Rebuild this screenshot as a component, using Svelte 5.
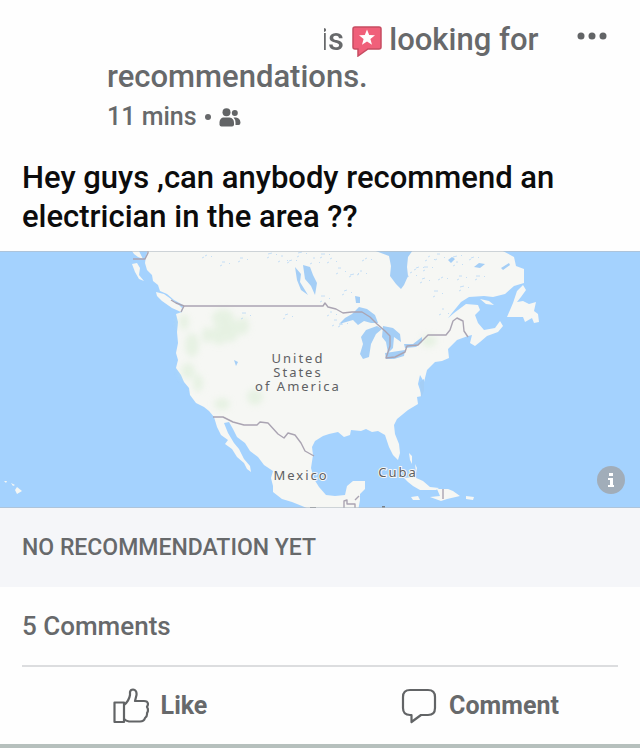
<script>
  const country = [
    { x: 298, y: 363, text: 'United' },
    { x: 298, y: 377, text: 'States' },
    { x: 298, y: 391, text: 'of America' }
  ];
  const labels = [
    { x: 301, y: 480, text: 'Mexico' },
    { x: 398, y: 477, text: 'Cuba' }
  ];
  const lakes = [
    [205, 256], [222, 262], [268, 254], [281, 256], [289, 261], [321, 254], [330, 259], [338, 268], [350, 275],
    [360, 271], [344, 291], [321, 296], [365, 259], [240, 258], [298, 253], [313, 258], [416, 268], [424, 267],
    [428, 257], [437, 254], [453, 257], [456, 262], [422, 279], [434, 291], [441, 278], [459, 276], [460, 287],
    [442, 309], [471, 258], [476, 276], [410, 273], [334, 320], [339, 325], [330, 312], [285, 315], [242, 313]
  ];
  const greens = [
    [223, 318, 11, 9], [230, 330, 9, 12], [219, 335, 8, 10], [243, 326, 6, 9], [192, 345, 7, 12], [184, 322, 5, 8],
    [188, 371, 7, 8], [198, 383, 5, 9], [255, 397, 8, 8], [222, 404, 8, 6], [429, 341, 8, 6], [207, 335, 5, 8]
  ];
</script>

<article class="post">
  <header>
    <h1>
      <span class="name"></span><span class="is">is</span>
      <svg class="badge" viewBox="0 0 30 31" aria-hidden="true">
        <path d="M3 1H27Q29 1 29 3V21Q29 23 27 23H16L6 30V23H3Q1 23 1 21V3Q1 1 3 1Z" fill="#f0607a" stroke="#c64c62" stroke-width="1.5" />
        <path d="M15 3.5L17.2 9L23 9.3L18.4 13L20 18.7L15 15.4L10 18.7L11.6 13L7 9.3L12.8 9Z" fill="#fff" />
      </svg>
      looking for recommendations.
    </h1>
    <button class="more" aria-label="More options">
      <svg viewBox="0 0 30 8" fill="#626466"><circle cx="4" cy="4" r="3.5" /><circle cx="15" cy="4" r="3.5" /><circle cx="26" cy="4" r="3.5" /></svg>
    </button>
    <div class="meta">
      <span>11 mins</span><span class="dot"></span>
      <svg viewBox="0 0 22 19" fill="#626466" role="img" aria-label="Friends">
        <circle cx="7.5" cy="4.2" r="4" />
        <circle cx="15.8" cy="5" r="3" />
        <path d="M4 9.5H10.5Q15 10 15 15V16.5Q15 18.5 13 18.5H2.5Q.5 18.5 .5 16.5V14Q1 10 4 9.5Z" />
        <path d="M14.5 9.5H17Q21 10 21.5 14.5Q21.5 17 19.5 17H16.5V14.5Q16.5 11.5 14.5 9.5Z" />
      </svg>
    </div>
  </header>

  <p class="message">Hey guys ,can anybody recommend an electrician in the area ??</p>

  <div class="map">
    <svg viewBox="0 251 640 257" role="img" aria-label="Map of North America">
      <defs>
        <filter id="soft"><feGaussianBlur stdDeviation="3" /></filter>
      </defs>
      <rect y="251" width="640" height="257" fill="#a4d2fe" />
      <g fill="#f6f7f4">
        <path d="M148 250L146 256L145 263L147 270L152 275L153 281L158 285L160 291L167 294L174 300L183 305L182 312L176 314L178 322L177 332L178 343L176 353L178 360L176 368L181 375L184 382L189 388L190 395L196 403L204 407L209 411L214 417L217 427L221 435L228 440L225 444L232 449L237 457L244 463L247 469L251 472L250 466L244 459L239 449L234 443L228 433L224 423L229 422L233 429L237 437L245 443L250 451L258 457L264 465L273 471L271 478L273 486L273 492L282 499L292 502L302 506L314 511H358L360 500L360 494L365 489L365 481L353 481L347 486L345 495L335 496L326 495L319 487L314 479L311 468L313 455L312 447L315 441L323 436L329 434L338 432L344 437L350 435L351 430L361 431L366 429L372 432L378 431L385 435L389 447L393 455L398 460L400 453L399 444L395 434L394 425L397 419L408 410L418 404L417 397L422 396L418 384L420 375L424 382L427 370L435 362L442 361L449 358L448 349L457 340L468 336L472 335L470 343L475 346L480 342L487 336L498 332L503 326L500 321L495 328L484 330L478 323L475 315L480 310L478 305L466 304L454 313L446 320L442 326L452 313L461 302L469 297L484 296L493 297L505 294L514 286L524 283L524 269L516 266L514 257L501 250Z" />
        <path d="M132 251H139L143 259L138 257L134 254ZM132 264L137 263L140 268L139 275L144 281L139 279L135 272ZM156 292L164 294L171 299L178 304L182 308L181 312L172 308L162 301L157 296Z" />
        <path d="M523 285L526 290L521 297L517 302L523 301L529 304L536 302L534 311L538 314L539 322L534 323L532 318L525 322L523 317L507 317L513 303L517 291ZM480 299L489 301L494 305L486 304Z" />
        <path d="M404 478L414 477L423 481L430 487L439 488L436 490L420 490L413 486L408 482ZM411 497L418 496L420 500L413 500ZM437 489L448 489L453 491L460 496L447 499L441 501L430 497L440 496ZM466 496L474 497L473 500L466 499ZM409 453L412 456L412 464L410 460ZM415 464L417 468L416 473Z" />
        <path d="M17 487L22 491L17 494L15 490ZM11 483L15 485L13 486ZM4 481L7 481L6 483Z" />
      </g>
      <g fill="#d7ecd2" opacity=".5" filter="url(#soft)">
        {#each greens as [cx, cy, rx, ry]}<ellipse {cx} {cy} {rx} {ry} />{/each}
      </g>
      <g fill="#a4cef6">
        <path d="M373 250H413L408 257L407 267L408 276L404 285L401 289L396 284L390 276L391 266L389 256Z" />
        <path d="M339 324L345 318L352 314L359 307L367 309L375 315L378 323L371 323L364 321L358 325L353 320Z" />
        <path d="M377 326L382 329L376 334L371 344L369 357L363 359L360 354L363 344L361 337L366 330Z" />
        <path d="M383 326L393 328L400 334L401 342L394 337L393 348L388 353L386 342L382 337Z" />
        <path d="M385 353L392 352L405 350L404 356L394 359L386 359ZM404 344L413 344L422 337L422 342L416 347L405 348Z" />
        <path d="M303 265L310 267L313 275L317 283L315 295L311 286L305 279ZM295 267L301 274L300 282L308 295L301 290L297 280ZM355 296L360 297L360 303L356 303ZM234 360L238 362L236 366ZM420 382L424 379L424 391L421 398Z" />
        <path d="M448 260l4-3 3 2-4 4zM474 267l5-4 6 1-5 4zM501 268l8-5 1 2-7 5z" />
      </g>
      <g fill="none" stroke="#a4cef6" stroke-width="1" opacity=".6">
        {#each lakes as [x, y], i}
          <path d="M{x} {y}l{2 + (i % 3)} {(i % 2) - 1}m-5 {3 + (i % 4)}l2 -1m7 {-(i % 3)}l1 -1" />
        {/each}
      </g>
      <g fill="none" stroke="#aaa4b2" stroke-width="1.4" stroke-linejoin="round">
        <path d="M133 259H145L148 253V250M171 300L176 303L184 306H323L325 303L328 307L336 309L343 313L352 312L362 312L370 317L377 324L385 331L390 336V346L386 358L395 357L405 352L407 346L418 345L428 335L446 335L450 330L453 321L457 318L463 321L464 331L468 337" />
        <path d="M184 306L181 312M213 417H223L233 422L244 425H257L260 422L268 423L278 434L284 438L288 433L295 435L301 443L305 451L314 456M344 508V501L347 500V504H355V508M355 500L359 496M443 489V499" />
        <path d="M310 508h6M382 507h3" stroke="#666" />
      </g>
      <g class="labels">
        <text>{#each country as line}<tspan x={line.x} y={line.y}>{line.text}</tspan>{/each}</text>
        {#each labels as label}<text x={label.x} y={label.y}>{label.text}</text>{/each}
      </g>
      <path d="M0 251.500H640M0 507.500H640" stroke="#b3bcc4" opacity=".6" />
    </svg>
    <button class="info" aria-label="Map information">
      <svg viewBox="0 0 28 28"><circle cx="14" cy="14" r="14" fill="#a1adb9" /><path d="M12 7H16V10H12ZM11 12H16V19H17V21H11V19H13V14H11Z" fill="#fff" /></svg>
    </button>
  </div>

  <div class="status">NO RECOMMENDATION YET</div>
  <div class="count"><a href="#comments">5 Comments</a></div>

  <footer>
    <button>
      <svg viewBox="0 0 36 36" fill="none" stroke="#626466" stroke-width="2.2" stroke-linejoin="round">
        <path d="M1.5 14.5H11V34H1.5Z" />
        <path d="M11 17Q16 13 17 7V4Q17.500 1.500 20 1.500Q24 2 23.500 7L22 13H31Q35 13 35 16.500L34 19Q36 22 34 25Q34.500 28 32 30Q31 33.500 27 33.500H16Q13 33 11 31" />
      </svg>
      Like
    </button>
    <button>
      <svg viewBox="0 0 36 36" fill="none" stroke="#626466" stroke-width="2.200" stroke-linejoin="round">
        <path d="M9 2H27Q34 2 34 9V20Q34 27 27 27H20L10.500 34V27H9Q2 27 2 20V9Q2 2 9 2Z" />
      </svg>
      Comment
    </button>
  </footer>
</article>

<style>
  :global(body) {
    margin: 0;
    background: #fefefe;
  }
  .post {
    font-family: Roboto, sans-serif;
    font-weight: 500;
    color: #67696b;
    border-bottom: 4px solid #b6c0bd;
  }
  button {
    font: inherit;
    color: inherit;
    background: none;
    border: 0;
    padding: 0;
    cursor: pointer;
  }
  svg {
    display: block;
  }
  header {
    display: grid;
    grid-template-columns: 1fr 30px;
    padding: 21px 33px 0 107px;
  }
  h1 {
    margin: 0;
    font-size: 31px;
    line-height: 37px;
    font-weight: 500;
  }
  .name {
    display: inline-block;
    width: 213px;
  }
  .is {
    color: transparent;
    background: linear-gradient(to right, transparent 4px, #67696b 4px);
    -webkit-background-clip: text;
    background-clip: text;
  }
  .badge {
    display: inline-block;
    width: 30px;
    height: 31px;
    vertical-align: -7px;
  }
  .more {
    align-self: start;
    padding-top: 11px;
  }
  .more svg {
    width: 30px;
    height: 8px;
  }
  .meta {
    display: flex;
    align-items: center;
    gap: 8px;
    font-size: 25px;
    line-height: 32px;
    padding-top: 6px;
  }
  .dot {
    width: 6px;
    height: 6px;
    border-radius: 50%;
    background: #67696b;
  }
  .meta svg {
    width: 22px;
    height: 19px;
  }
  .message {
    margin: 0;
    padding: 25px 22px 15px;
    font-size: 31px;
    line-height: 39px;
    color: #0c0c0c;
  }
  .map {
    position: relative;
  }
  .map > svg {
    width: 100%;
    height: auto;
  }
  .labels text {
    font-family: "Noto Sans", sans-serif;
    font-size: 13px;
    font-weight: 400;
    letter-spacing: 2px;
    text-anchor: middle;
    fill: #5e6063;
    stroke: #f6f7f4;
    stroke-width: 2px;
    paint-order: stroke;
  }
  .info {
    position: absolute;
    right: 15px;
    bottom: 14px;
    width: 28px;
  }
  .status {
    padding: 1px 22px 0;
    font-size: 23px;
    line-height: 78px;
    background: #f5f6f9;
  }
  .count {
    margin: 0 22px;
    font-size: 26px;
    line-height: 78px;
    border-bottom: 2px solid #dcdddf;
  }
  .count a {
    color: inherit;
    text-decoration: none;
  }
  footer {
    display: grid;
    grid-template-columns: 1fr 1fr;
  }
  footer button {
    display: flex;
    align-items: center;
    justify-content: center;
    gap: 12px;
    font-size: 25px;
    line-height: 77px;
    font-weight: 700;
  }
  footer svg {
    width: 36px;
    height: 36px;
  }
</style>
